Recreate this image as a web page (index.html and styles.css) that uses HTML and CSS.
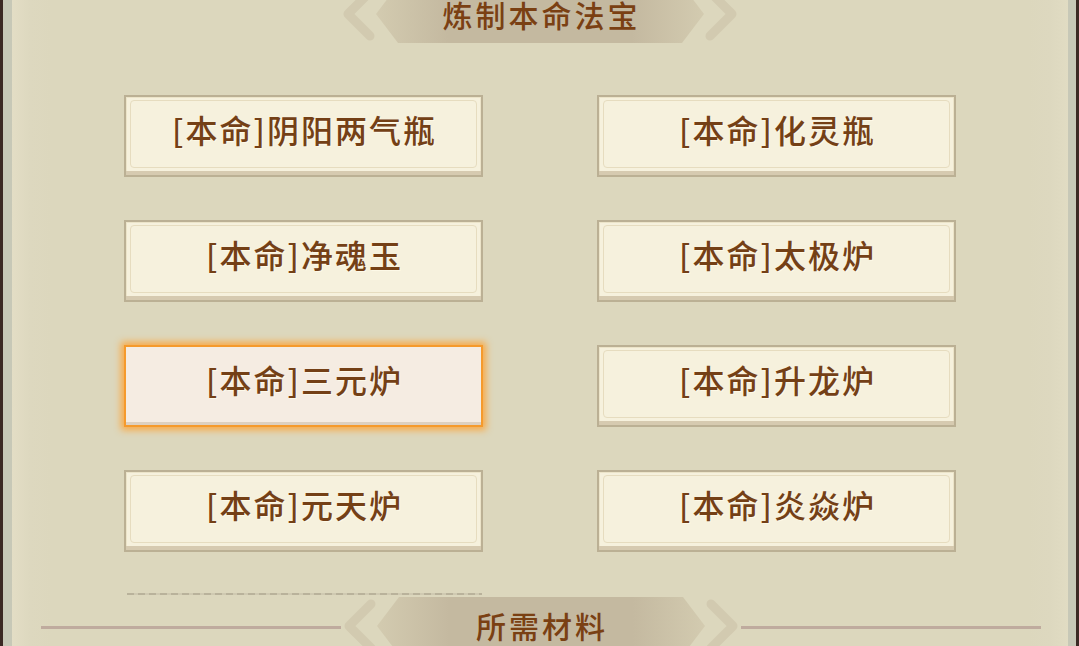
FILE: index.html
```html
<!DOCTYPE html>
<html lang="zh">
<head>
<meta charset="utf-8">
<title>炼制本命法宝</title>
<link rel="stylesheet" href="styles.css">
</head>
<body>
<div class="frame">
  <div class="edge">
    <div class="panel">
      <div class="heading heading-top">
        <div class="banner">
          <svg class="banner-art" width="400" height="58" viewBox="0 0 400 58">
            <defs>
              <linearGradient id="bg1" x1="0" x2="1" y1="0" y2="0">
                <stop offset="0" stop-color="#d3cbb0"/>
                <stop offset="0.22" stop-color="#c4b9a0"/>
                <stop offset="0.78" stop-color="#c4b9a0"/>
                <stop offset="1" stop-color="#d3cbb0"/>
              </linearGradient>
            </defs>
            <polyline points="30,7 8,29 30,51" fill="none" stroke="#d2cab0" stroke-width="9" stroke-linejoin="round" stroke-linecap="round"/>
            <polyline points="370,7 392,29 370,51" fill="none" stroke="#d2cab0" stroke-width="9" stroke-linejoin="round" stroke-linecap="round"/>
            <polygon points="58,0 342,0 364,29 342,58 58,58 36,29" fill="url(#bg1)"/>
          </svg>
          <span class="banner-text">炼制本命法宝</span>
        </div>
      </div>

      <div class="list">
        <div class="grid">
          <div class="item"><span>[本命]阴阳两气瓶</span></div>
          <div class="item"><span>[本命]化灵瓶</span></div>
          <div class="item"><span>[本命]净魂玉</span></div>
          <div class="item"><span>[本命]太极炉</span></div>
          <div class="item item-active"><span>[本命]三元炉</span></div>
          <div class="item"><span>[本命]升龙炉</span></div>
          <div class="item"><span>[本命]元天炉</span></div>
          <div class="item"><span>[本命]炎焱炉</span></div>
        </div>
        <div class="dash"></div>
      </div>

      <div class="heading heading-bottom">
        <div class="rule"></div>
        <div class="banner">
          <svg class="banner-art" width="400" height="58" viewBox="0 0 400 58">
            <defs>
              <linearGradient id="bg2" x1="0" x2="1" y1="0" y2="0">
                <stop offset="0" stop-color="#d3cbb0"/>
                <stop offset="0.22" stop-color="#c4b9a0"/>
                <stop offset="0.78" stop-color="#c4b9a0"/>
                <stop offset="1" stop-color="#d3cbb0"/>
              </linearGradient>
            </defs>
            <polyline points="30,7 8,29 30,51" fill="none" stroke="#d2cab0" stroke-width="9" stroke-linejoin="round" stroke-linecap="round"/>
            <polyline points="370,7 392,29 370,51" fill="none" stroke="#d2cab0" stroke-width="9" stroke-linejoin="round" stroke-linecap="round"/>
            <polygon points="58,0 342,0 364,29 342,58 58,58 36,29" fill="url(#bg2)"/>
          </svg>
          <span class="banner-text">所需材料</span>
        </div>
        <div class="rule"></div>
      </div>
    </div>
  </div>
</div>
</body>
</html>
```

FILE: styles.css
```css
html, body {
  margin: 0;
  padding: 0;
  width: 1079px;
  height: 646px;
  overflow: hidden;
  background: #dcd7bd;
  font-family: "Noto Sans CJK SC", "Noto Sans", sans-serif;
}

.frame {
  height: 646px;
  border-left: 3px solid #3b2924;
  border-right: 3px solid #3b2924;
  box-sizing: border-box;
}

.edge {
  height: 100%;
  border-left: 9px solid #c7c8b7;
  border-right: 8px solid #c7c8b7;
  box-sizing: border-box;
  background:
    linear-gradient(90deg, #e3ddc5 0, #ddd8bf 18px, rgba(220,215,189,0) 40px),
    linear-gradient(270deg, #e1dcc3 0, #ddd8bf 18px, rgba(220,215,189,0) 40px),
    #dcd7bd;
}

.panel {
  display: flex;
  flex-direction: column;
  align-items: center;
  height: 100%;
  overflow: hidden;
}

.heading {
  display: flex;
  align-items: center;
  justify-content: center;
  height: 58px;
  flex: none;
}

.heading-top {
  margin-top: -15px;
}

.heading-bottom {
  margin-top: 2px;
  width: 1000px;
  margin-left: 1px;
}

.rule {
  width: 300px;
  height: 3px;
  background: #bfab9e;
  margin-top: 2px;
}

.banner {
  position: relative;
  width: 400px;
  height: 58px;
  display: flex;
  align-items: center;
  justify-content: center;
  flex: none;
}

.banner-art {
  position: absolute;
  left: 0;
  top: 0;
}

.banner-text {
  position: relative;
  font-size: 30px;
  letter-spacing: 3px;
  margin-right: -3px;
  color: #7a4013;
  font-weight: 500;
  line-height: 1;
  margin-top: -2px;
}

.heading-top .banner-text {
  margin-top: -1px;
}

.list {
  margin-top: 52px;
  width: 832px;
  display: flex;
  flex-direction: column;
}

.grid {
  display: grid;
  grid-template-columns: 359px 359px;
  grid-auto-rows: 82px;
  column-gap: 114px;
  row-gap: 43px;
}

.item {
  position: relative;
  box-sizing: border-box;
  border: 2px solid #bbb094;
  background: #f6f1dd;
  box-shadow: inset 0 -4px 0 #d6cab0, inset 0 0 0 1px #ece4c9;
  display: flex;
  align-items: center;
  justify-content: center;
  padding-bottom: 15px;
}

.item::before {
  content: "";
  position: absolute;
  left: 4px;
  right: 4px;
  top: 3px;
  bottom: 7px;
  border: 1px solid #e6dcbf;
  border-radius: 4px;
}

.item span {
  position: relative;
  font-size: 32px;
  letter-spacing: 2px;
  margin-right: -2px;
  color: #744016;
  font-weight: 500;
  line-height: 1;
  text-shadow: 1px 1px 0 rgba(255, 252, 235, 0.8);
}

.item-active {
  border-color: #f59a2c;
  background: #f5ece2;
  box-shadow: 0 0 7px 3px #f9a945, inset 0 -3px 0 #ddd0c0;
}

.item-active::before {
  border-color: transparent;
}

.dash {
  margin-top: 41px;
  margin-left: 3px;
  width: 355px;
  height: 2px;
  background: repeating-linear-gradient(90deg, #b9b29b 0, #b9b29b 7px, #cfc9b1 7px, #cfc9b1 11px);
}
```
